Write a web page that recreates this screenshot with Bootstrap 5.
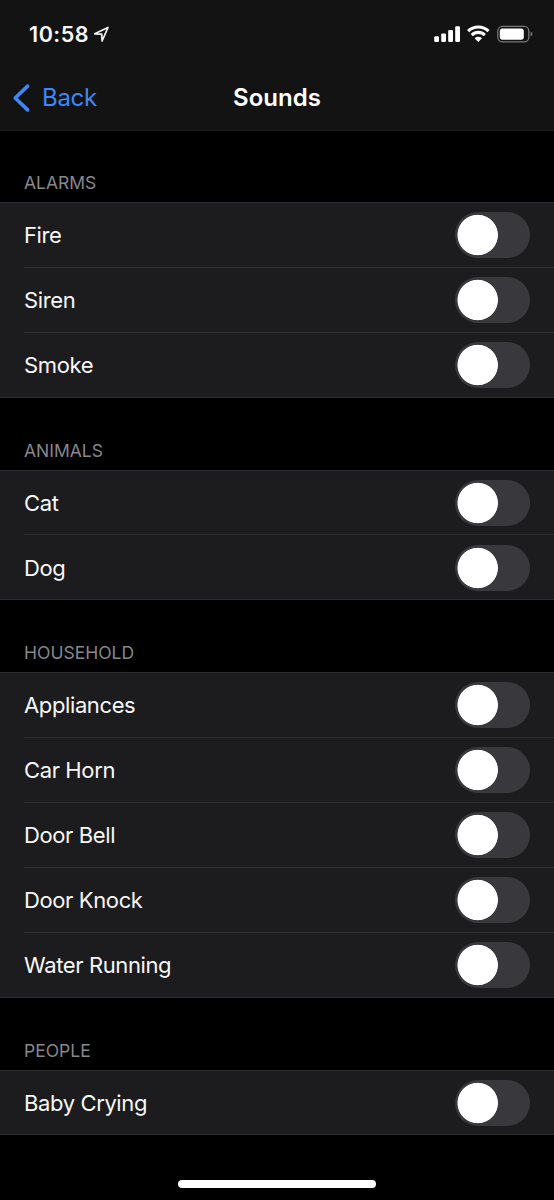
<!DOCTYPE html>
<html lang="en" data-bs-theme="dark">
<head>
<meta charset="utf-8">
<meta name="viewport" content="width=device-width, initial-scale=1">
<title>Sounds</title>
<link href="https://cdn.jsdelivr.net/npm/bootstrap@5.3.0/dist/css/bootstrap.min.css" rel="stylesheet">
<style>
  body { background: #000; color: #f7f7f8; font-family: Inter, "Liberation Sans", sans-serif; font-size: 22px; line-height: 28px; }
  .screen { height: 1200px; overflow: hidden; }
  .top-area { height: 131px; background: #131313; border-bottom: 1px solid #1b1b1c; }
  .status { height: 68px; padding: 0 21px 0 29px; }
  .clock { font-size: 21.5px; font-weight: 600; letter-spacing: .55px; }
  .title-bar { height: 60px; padding: 0 12px; display: grid; grid-template-columns: 1fr auto 1fr; }
  .back { color: #3f86f6; font-size: 24px; letter-spacing: -.3px; }
  .title { font-size: 24px; font-weight: 600; }
  .group-label { height: 72px; padding: 0 24px 8px; font-size: 17.5px; line-height: 22px; color: #87878c; }
  .group-label.first { height: 71px; }
  .sound-list { border-top: 1px solid #2c2c2e; border-bottom: 1px solid #2c2c2e; background: #1c1c1e; padding-left: 24px; --bs-list-group-border-radius: 0; }
  .sound-list .list-group-item { height: 65px; padding: 0 24px 0 0; background: none; border: 0; border-bottom: 1px solid #2e2e30; color: inherit; letter-spacing: -.38px; }
  .sound-list .list-group-item:last-child { height: 64px; border-bottom: 0; }
  .sound-list.tight .list-group-item:first-child { height: 64px; }
  .sound-list.tight .list-group-item:last-child:not(:first-child) { padding-top: 2px; }
  .sound-list.tight .list-group-item:only-child { height: 63px; }
  .form-switch .form-check-input { width: 75px; height: 46px; margin: 0; border: 0; border-radius: 23px; background: radial-gradient(circle at 22.7px 23px, #fff 19.8px, transparent 20.6px) #39393d; }
  .home-bar { width: 198px; height: 8px; background: #fff; margin-top: 45px; }
</style>
</head>
<body>
<div class="screen d-flex flex-column">
  <header class="top-area flex-shrink-0">
    <div class="status d-flex align-items-center justify-content-between">
      <div class="d-flex align-items-center gap-1">
        <span class="clock">10:58</span>
        <svg width="17" height="17" viewBox="0 0 17 17" fill="none" stroke="#f4f4f4" stroke-width="1.7" stroke-linejoin="round"><path d="M1.7 7.8 15 1.5 9.1 15 8.7 8.2Z"/></svg>
      </div>
      <div class="d-flex align-items-center">
        <svg width="99" height="18" viewBox="0 0 99 18" fill="none">
          <g fill="#fff"><rect x=".2" y="11.2" width="4.8" height="5.8" rx="1.2"/><rect x="7.2" y="8.4" width="4.8" height="8.6" rx="1.2"/><rect x="14.2" y="4.9" width="4.8" height="12.1" rx="1.2"/><rect x="21.2" y="1.2" width="4.8" height="15.8" rx="1.2"/>
          <path d="M44.3 17 48 13.3A5.5 5.5 0 0 0 40.6 13.3Z"/></g>
          <path d="M34.1 6.2a14.5 14.5 0 0 1 20.4 0M37.8 10.1a9.2 9.2 0 0 1 13 0" stroke="#fff" stroke-width="3.1"/>
          <rect x="63.8" y="1.4" width="31" height="15.4" rx="4.6" stroke="#77777a" stroke-width="1.3"/>
          <rect x="65.8" y="3.5" width="24" height="11.2" rx="2.6" fill="#fff"/>
          <path d="M96.6 6.6q1.9.8 1.9 2.5t-1.9 2.5Z" fill="#77777a"/>
        </svg>
      </div>
    </div>
    <nav class="title-bar align-items-center">
      <a class="back d-flex align-items-center text-decoration-none" href="#">
        <svg class="me-2" width="22" height="30" viewBox="0 0 22 30" fill="none" stroke="currentColor" stroke-width="3.6" stroke-linecap="round" stroke-linejoin="round"><path d="M15.6 3.1 3.2 15l12.4 11.9"/></svg>
        Back
      </a>
      <h1 class="title m-0">Sounds</h1>
    </nav>
  </header>

  <main>
    <div class="group-label first d-flex align-items-end">ALARMS</div>
    <div class="sound-list list-group list-group-flush">
      <label class="list-group-item d-flex align-items-center justify-content-between">Fire<span class="form-switch p-0 d-flex"><input class="form-check-input" type="checkbox" role="switch"></span></label>
      <label class="list-group-item d-flex align-items-center justify-content-between">Siren<span class="form-switch p-0 d-flex"><input class="form-check-input" type="checkbox" role="switch"></span></label>
      <label class="list-group-item d-flex align-items-center justify-content-between">Smoke<span class="form-switch p-0 d-flex"><input class="form-check-input" type="checkbox" role="switch"></span></label>
    </div>

    <div class="group-label d-flex align-items-end">ANIMALS</div>
    <div class="sound-list tight list-group list-group-flush">
      <label class="list-group-item d-flex align-items-center justify-content-between">Cat<span class="form-switch p-0 d-flex"><input class="form-check-input" type="checkbox" role="switch"></span></label>
      <label class="list-group-item d-flex align-items-center justify-content-between">Dog<span class="form-switch p-0 d-flex"><input class="form-check-input" type="checkbox" role="switch"></span></label>
    </div>

    <div class="group-label d-flex align-items-end">HOUSEHOLD</div>
    <div class="sound-list list-group list-group-flush">
      <label class="list-group-item d-flex align-items-center justify-content-between">Appliances<span class="form-switch p-0 d-flex"><input class="form-check-input" type="checkbox" role="switch"></span></label>
      <label class="list-group-item d-flex align-items-center justify-content-between">Car Horn<span class="form-switch p-0 d-flex"><input class="form-check-input" type="checkbox" role="switch"></span></label>
      <label class="list-group-item d-flex align-items-center justify-content-between">Door Bell<span class="form-switch p-0 d-flex"><input class="form-check-input" type="checkbox" role="switch"></span></label>
      <label class="list-group-item d-flex align-items-center justify-content-between">Door Knock<span class="form-switch p-0 d-flex"><input class="form-check-input" type="checkbox" role="switch"></span></label>
      <label class="list-group-item d-flex align-items-center justify-content-between">Water Running<span class="form-switch p-0 d-flex"><input class="form-check-input" type="checkbox" role="switch"></span></label>
    </div>

    <div class="group-label d-flex align-items-end">PEOPLE</div>
    <div class="sound-list tight list-group list-group-flush">
      <label class="list-group-item d-flex align-items-center justify-content-between">Baby Crying<span class="form-switch p-0 d-flex"><input class="form-check-input" type="checkbox" role="switch"></span></label>
    </div>
  </main>
  <div class="home-bar rounded-pill mx-auto flex-shrink-0"></div>
</div>
<script src="https://cdn.jsdelivr.net/npm/bootstrap@5.3.0/dist/js/bootstrap.bundle.min.js"></script>
</body>
</html>
